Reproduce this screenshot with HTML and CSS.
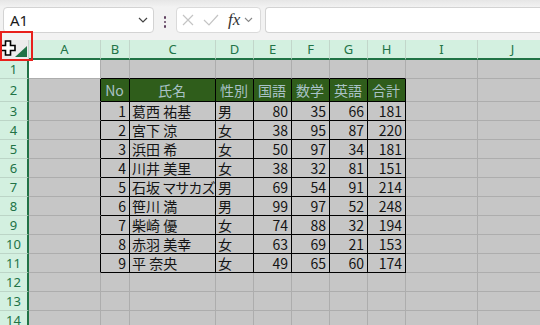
FILE: index.html
```html
<!DOCTYPE html>
<html lang="ja">
<head>
    <meta charset="UTF-8">
    <meta name="viewport" content="width=device-width, initial-scale=1.0">
    <title>成績表</title>
    <link rel="stylesheet" href="styles.css">
</head>
<body>
    <!-- 数式バー -->
    <div class="toolbar">
        <div class="namebox">
            <span>A1</span>
            <svg width="10" height="6" viewBox="0 0 10 6"><polyline points="1,1 5,5 9,1" fill="none" stroke="#444" stroke-width="1.2"/></svg>
        </div>
        <div class="dots"><i></i><i></i><i></i></div>
        <div class="fxbox">
            <svg class="btn-x" width="12" height="12" viewBox="0 0 12 12"><path d="M1 1L11 11M11 1L1 11" stroke="#c4c4c4" stroke-width="1.2"/></svg>
            <svg class="btn-ok" width="16" height="12" viewBox="0 0 16 12"><polyline points="1,6 6,11 15,1" fill="none" stroke="#c4c4c4" stroke-width="1.2"/></svg>
            <span class="fx">fx</span>
            <svg class="btn-more" width="9" height="6" viewBox="0 0 9 6"><polyline points="1,1 4.5,4.5 8,1" fill="none" stroke="#888" stroke-width="1.1"/></svg>
        </div>
        <div class="formula"></div>
    </div>

    <!-- シート -->
    <table class="sheet">
        <colgroup>
            <col class="c-rh"><col class="c-a"><col class="c-b"><col class="c-c">
            <col class="c-n"><col class="c-n"><col class="c-n"><col class="c-n"><col class="c-n">
            <col class="c-i"><col class="c-j">
        </colgroup>
        <tr class="hdr">
            <th class="corner"><svg width="12" height="11" viewBox="0 0 12 11"><polygon points="12,0 12,11 0,11" fill="#217346"/></svg></th>
            <th class="ch">A</th><th class="ch">B</th><th class="ch">C</th><th class="ch">D</th><th class="ch">E</th>
            <th class="ch">F</th><th class="ch">G</th><th class="ch">H</th><th class="ch">I</th><th class="ch">J</th>
        </tr>
        <tr>
            <th class="rh">1</th><td class="active"></td>
            <td class="tt"></td><td class="tt"></td><td class="tt"></td><td class="tt"></td><td class="tt"></td><td class="tt"></td><td class="tt"></td>
            <td></td><td></td>
        </tr>
        <tr class="tall">
            <th class="rh">2</th><td class="tl"></td>
            <td class="t th">No</td><td class="t th">氏名</td><td class="t th">性別</td><td class="t th">国語</td><td class="t th">数学</td><td class="t th">英語</td><td class="t th">合計</td>
            <td></td><td></td>
        </tr>
        <tr>
            <th class="rh">3</th><td class="tl"></td>
            <td class="t num">1</td><td class="t">葛西 祐基</td><td class="t">男</td><td class="t num">80</td><td class="t num">35</td><td class="t num">66</td><td class="t num">181</td>
            <td></td><td></td>
        </tr>
        <tr>
            <th class="rh">4</th><td class="tl"></td>
            <td class="t num">2</td><td class="t">宮下 涼</td><td class="t">女</td><td class="t num">38</td><td class="t num">95</td><td class="t num">87</td><td class="t num">220</td>
            <td></td><td></td>
        </tr>
        <tr>
            <th class="rh">5</th><td class="tl"></td>
            <td class="t num">3</td><td class="t">浜田 希</td><td class="t">女</td><td class="t num">50</td><td class="t num">97</td><td class="t num">34</td><td class="t num">181</td>
            <td></td><td></td>
        </tr>
        <tr>
            <th class="rh">6</th><td class="tl"></td>
            <td class="t num">4</td><td class="t">川井 美里</td><td class="t">女</td><td class="t num">38</td><td class="t num">32</td><td class="t num">81</td><td class="t num">151</td>
            <td></td><td></td>
        </tr>
        <tr>
            <th class="rh">7</th><td class="tl"></td>
            <td class="t num">5</td><td class="t">石坂 マサカズ</td><td class="t">男</td><td class="t num">69</td><td class="t num">54</td><td class="t num">91</td><td class="t num">214</td>
            <td></td><td></td>
        </tr>
        <tr>
            <th class="rh">8</th><td class="tl"></td>
            <td class="t num">6</td><td class="t">笹川 満</td><td class="t">男</td><td class="t num">99</td><td class="t num">97</td><td class="t num">52</td><td class="t num">248</td>
            <td></td><td></td>
        </tr>
        <tr>
            <th class="rh">9</th><td class="tl"></td>
            <td class="t num">7</td><td class="t">柴崎 優</td><td class="t">女</td><td class="t num">74</td><td class="t num">88</td><td class="t num">32</td><td class="t num">194</td>
            <td></td><td></td>
        </tr>
        <tr>
            <th class="rh">10</th><td class="tl"></td>
            <td class="t num">8</td><td class="t">赤羽 美幸</td><td class="t">女</td><td class="t num">63</td><td class="t num">69</td><td class="t num">21</td><td class="t num">153</td>
            <td></td><td></td>
        </tr>
        <tr>
            <th class="rh">11</th><td class="tl"></td>
            <td class="t num">9</td><td class="t">平 奈央</td><td class="t">女</td><td class="t num">49</td><td class="t num">65</td><td class="t num">60</td><td class="t num">174</td>
            <td></td><td></td>
        </tr>
        <tr>
            <th class="rh">12</th><td></td><td></td><td></td><td></td><td></td><td></td><td></td><td></td><td></td><td></td>
        </tr>
        <tr>
            <th class="rh">13</th><td></td><td></td><td></td><td></td><td></td><td></td><td></td><td></td><td></td><td></td>
        </tr>
        <tr>
            <th class="rh">14</th><td></td><td></td><td></td><td></td><td></td><td></td><td></td><td></td><td></td><td></td>
        </tr>
    </table>

    <!-- 全選択カーソルと注目枠 -->
    <svg class="cursor" width="16" height="16" viewBox="0 0 16 16">
        <polygon points="5.5,1 10.5,1 10.5,5.5 15,5.5 15,10.5 10.5,10.5 10.5,15 5.5,15 5.5,10.5 1,10.5 1,5.5 5.5,5.5" fill="#fff" stroke="#000" stroke-width="1.6" stroke-linejoin="miter"/>
    </svg>
    <div class="mark"></div>
</body>
</html>
```

FILE: styles.css
```css
/* 基本 */
body {
    margin: 0;
    width: 540px;
    height: 325px;
    overflow: hidden;
    position: relative;
    background: #c6c6c6;
    font-family: "Noto Sans", "Noto Sans CJK JP", sans-serif;
}

/* 数式バー */
.toolbar {
    height: 40px;
    box-sizing: border-box;
    padding: 7px 0 0 3px;
    display: flex;
    align-items: flex-start;
    background: linear-gradient(#e6e6e6, #f2f2f2 7px, #f2f2f2);
}

.namebox {
    width: 151px;
    height: 26px;
    box-sizing: border-box;
    border: 1px solid #d3d3d3;
    border-radius: 4px;
    background: white;
    display: flex;
    align-items: center;
    justify-content: space-between;
    padding: 0 5px 0 6px;
    font-size: 15px;
    color: #1a1a1a;
}

.dots {
    width: 22px;
    height: 26px;
    box-sizing: border-box;
    padding-top: 9px;
    display: flex;
    flex-direction: column;
    align-items: center;
    gap: 2px;
}

.dots i {
    width: 2.5px;
    height: 2.5px;
    border-radius: 50%;
    background: #5e3f5e;
}

.fxbox {
    width: 85px;
    height: 26px;
    box-sizing: border-box;
    border: 1px solid #dadada;
    border-radius: 4px;
    background: white;
    display: flex;
    align-items: center;
    padding-left: 5px;
}

.btn-ok {
    margin-left: 9px;
}

.fx {
    margin-left: 9px;
    font-family: "Liberation Serif", serif;
    font-style: italic;
    font-size: 17px;
    line-height: 20px;
    color: #333;
}

.btn-more {
    margin-left: 4px;
}

.formula {
    flex: 1;
    height: 26px;
    margin-left: 4px;
    box-sizing: border-box;
    border: 1px solid #d3d3d3;
    border-right: none;
    border-radius: 4px 0 0 4px;
    background: white;
}

/* シート */
.sheet {
    border-collapse: separate;
    border-spacing: 0;
    table-layout: fixed;
    width: 548px;
}

.c-rh { width: 29px; }
.c-a { width: 72px; }
.c-b { width: 29px; }
.c-c { width: 86px; }
.c-n { width: 38px; }
.c-i { width: 72px; }
.c-j { width: 70px; }

.sheet tr {
    height: 19px;
}

.sheet tr.hdr {
    height: 20px;
}

.sheet tr.tall {
    height: 23px;
}

.sheet td {
    padding: 0 3px 0 2px;
    border-right: 1px solid #adadad;
    border-bottom: 1px solid #adadad;
    background: #c6c6c6;
    font-family: "Noto Sans CJK JP", sans-serif;
    font-size: 14px;
    font-feature-settings: "palt";
    line-height: 17px;
    color: #141414;
    white-space: nowrap;
    overflow: hidden;
    vertical-align: middle;
}

.corner {
    padding: 0 1px 1px 0;
    background: #ececec;
    border-right: 1px solid #cfcfcf;
    border-bottom: 2px solid #ececec;
    text-align: right;
    vertical-align: bottom;
    line-height: 0;
}

.ch {
    padding: 0;
    background: #d3f0e0;
    border-right: 1px solid #c2d6ca;
    border-bottom: 2px solid #217346;
    font-size: 13px;
    font-weight: normal;
    line-height: 18px;
    color: #217346;
    text-align: center;
}

.rh {
    padding: 0;
    background: #d3f0e0;
    border-right: 2px solid #217346;
    border-bottom: 1px solid #bcd5c7;
    font-size: 13px;
    font-weight: normal;
    line-height: 17px;
    color: #217346;
    text-align: center;
}

.sheet td.active {
    background: white;
}

/* 表の罫線 */
.sheet td.t {
    border-right-color: #000;
    border-bottom-color: #000;
}

.sheet td.tt {
    border-bottom-color: #000;
}

.sheet td.tl {
    border-right-color: #000;
}

.sheet td.th {
    background: #2f5d1b;
    color: #a9c2c6;
    text-align: center;
    font-feature-settings: normal;
}

.sheet td.num {
    text-align: right;
}

/* 重ねもの */
.cursor {
    position: absolute;
    left: 0;
    top: 40px;
}

.mark {
    position: absolute;
    left: 0;
    top: 31px;
    width: 33px;
    height: 30px;
    box-sizing: border-box;
    border: 2px solid #e8201c;
}
```
